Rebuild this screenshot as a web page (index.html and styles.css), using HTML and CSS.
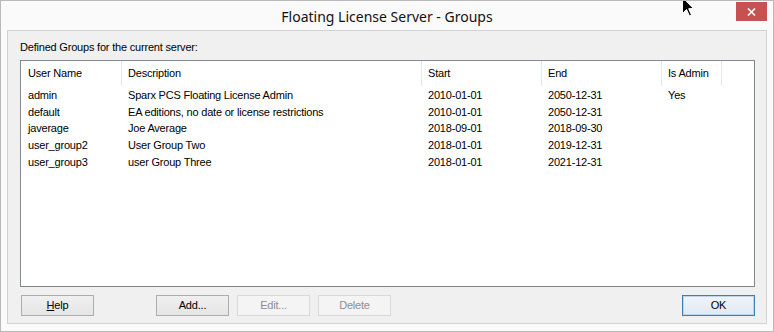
FILE: index.html
```html
<!DOCTYPE html>
<html>
<head>
<meta charset="utf-8">
<title>Floating License Server - Groups</title>
<link rel="stylesheet" href="styles.css">
</head>
<body>
<div class="window">
  <div class="titlebar">
    <span class="title">Floating License Server - Groups</span>
    <div class="close">
      <svg width="9" height="8" viewBox="0 0 9 8"><path d="M1 0.5 L8 7.5 M8 0.5 L1 7.5" stroke="#fff" stroke-width="1.6" fill="none"/></svg>
    </div>
  </div>
  <div class="client">
    <div class="label">Defined Groups for the current server:</div>
    <div class="list">
      <div class="row header">
        <div class="c c1">User Name</div>
        <div class="c c2">Description</div>
        <div class="c c3">Start</div>
        <div class="c c4">End</div>
        <div class="c c5">Is Admin</div>
        <div class="c c6"></div>
      </div>
      <div class="row">
        <div class="c c1">admin</div>
        <div class="c c2">Sparx PCS Floating License Admin</div>
        <div class="c c3">2010-01-01</div>
        <div class="c c4">2050-12-31</div>
        <div class="c c5">Yes</div>
      </div>
      <div class="row">
        <div class="c c1">default</div>
        <div class="c c2">EA editions, no date or license restrictions</div>
        <div class="c c3">2010-01-01</div>
        <div class="c c4">2050-12-31</div>
        <div class="c c5"></div>
      </div>
      <div class="row">
        <div class="c c1">javerage</div>
        <div class="c c2">Joe Average</div>
        <div class="c c3">2018-09-01</div>
        <div class="c c4">2018-09-30</div>
        <div class="c c5"></div>
      </div>
      <div class="row">
        <div class="c c1">user_group2</div>
        <div class="c c2">User Group Two</div>
        <div class="c c3">2018-01-01</div>
        <div class="c c4">2019-12-31</div>
        <div class="c c5"></div>
      </div>
      <div class="row">
        <div class="c c1">user_group3</div>
        <div class="c c2">user Group Three</div>
        <div class="c c3">2018-01-01</div>
        <div class="c c4">2021-12-31</div>
        <div class="c c5"></div>
      </div>
    </div>
    <div class="buttons">
      <div class="btn help"><u>H</u>elp</div>
      <div class="btn add">Add...</div>
      <div class="btn disabled">Edit...</div>
      <div class="btn disabled">Delete</div>
      <div class="btn ok">OK</div>
    </div>
  </div>
  <svg class="cursor" width="13" height="20" viewBox="0 0 13 20"><path d="M0.5 0.5 L0.5 16.5 L4.5 12.5 L7.5 19 L9.5 18 L6.7 11.7 L11.5 11.5 Z" fill="#000" stroke="#fff" stroke-width="1"/></svg>
</div>
</body>
</html>
```
FILE: styles.css
```css
html, body {
  margin: 0;
  padding: 0;
  background: #fafafa;
}
.window {
  position: relative;
  width: 774px;
  height: 332px;
  box-sizing: border-box;
  border: 1px solid #b9b9b9;
  background: #fafafa;
  padding: 0 6px 7px 6px;
  overflow: hidden;
  font-family: "Liberation Sans", Arial, sans-serif;
  font-size: 11px;
  letter-spacing: -0.2px;
  color: #000;
}
.titlebar {
  height: 29px;
  display: flex;
  align-items: center;
  justify-content: center;
  position: relative;
}
.title {
  font-family: "Noto Sans", "Open Sans", sans-serif;
  font-size: 14px;
  letter-spacing: 0;
  color: #111;
  margin-top: 2px;
}
.close {
  position: absolute;
  right: 0px;
  top: 1px;
  width: 31px;
  height: 19px;
  background: #c75050;
  display: flex;
  align-items: center;
  justify-content: center;
}
.client {
  height: 294px;
  box-sizing: border-box;
  border: 1px solid #d2d2d2;
  background: #f0f0f0;
  padding: 9px 11px 7px 12px;
  display: flex;
  flex-direction: column;
}
.label {
  height: 14px;
  line-height: 14px;
}
.list {
  margin-top: 6px;
  height: 227px;
  box-sizing: border-box;
  border: 1px solid #828790;
  background: #fff;
  padding-left: 1px;
}
.row {
  display: flex;
  height: 16.7px;
  line-height: 16.7px;
  white-space: nowrap;
}
.row.header {
  height: 25px;
  line-height: 24px;
  margin-bottom: 1px;
}
.c {
  box-sizing: border-box;
  padding-left: 6px;
  overflow: hidden;
}
.c1 { width: 100px; }
.c2 { width: 300px; }
.c3 { width: 120px; }
.c4 { width: 120px; }
.c5 { width: 60px; }
.c6 { width: 30px; }
.header .c1 { padding-left: 6px; }
.header .c1, .header .c2, .header .c3, .header .c4, .header .c5 {
  border-right: 1px solid #e3e8ef;
}
.buttons {
  margin-top: 8px;
  display: flex;
  padding-left: 1px;
}
.btn {
  width: 73px;
  height: 21px;
  box-sizing: border-box;
  border: 1px solid #adadad;
  background: linear-gradient(#f0f0f0, #e5e5e5);
  text-align: center;
  line-height: 19px;
  color: #000;
}
.btn.add { margin-left: 62px; }
.btn.disabled {
  margin-left: 8px;
  border-color: #d9d9d9;
  background: #f4f4f4;
  color: #8d8d8d;
}
.btn.ok {
  margin-left: auto;
  border: 1px solid #3c7fb1;
  box-shadow: inset 0 0 0 1px #b8d6ee;
  background: linear-gradient(#eef4fa, #e2e9f0);
}
.cursor {
  position: absolute;
  left: 681px;
  top: -4px;
}
```
